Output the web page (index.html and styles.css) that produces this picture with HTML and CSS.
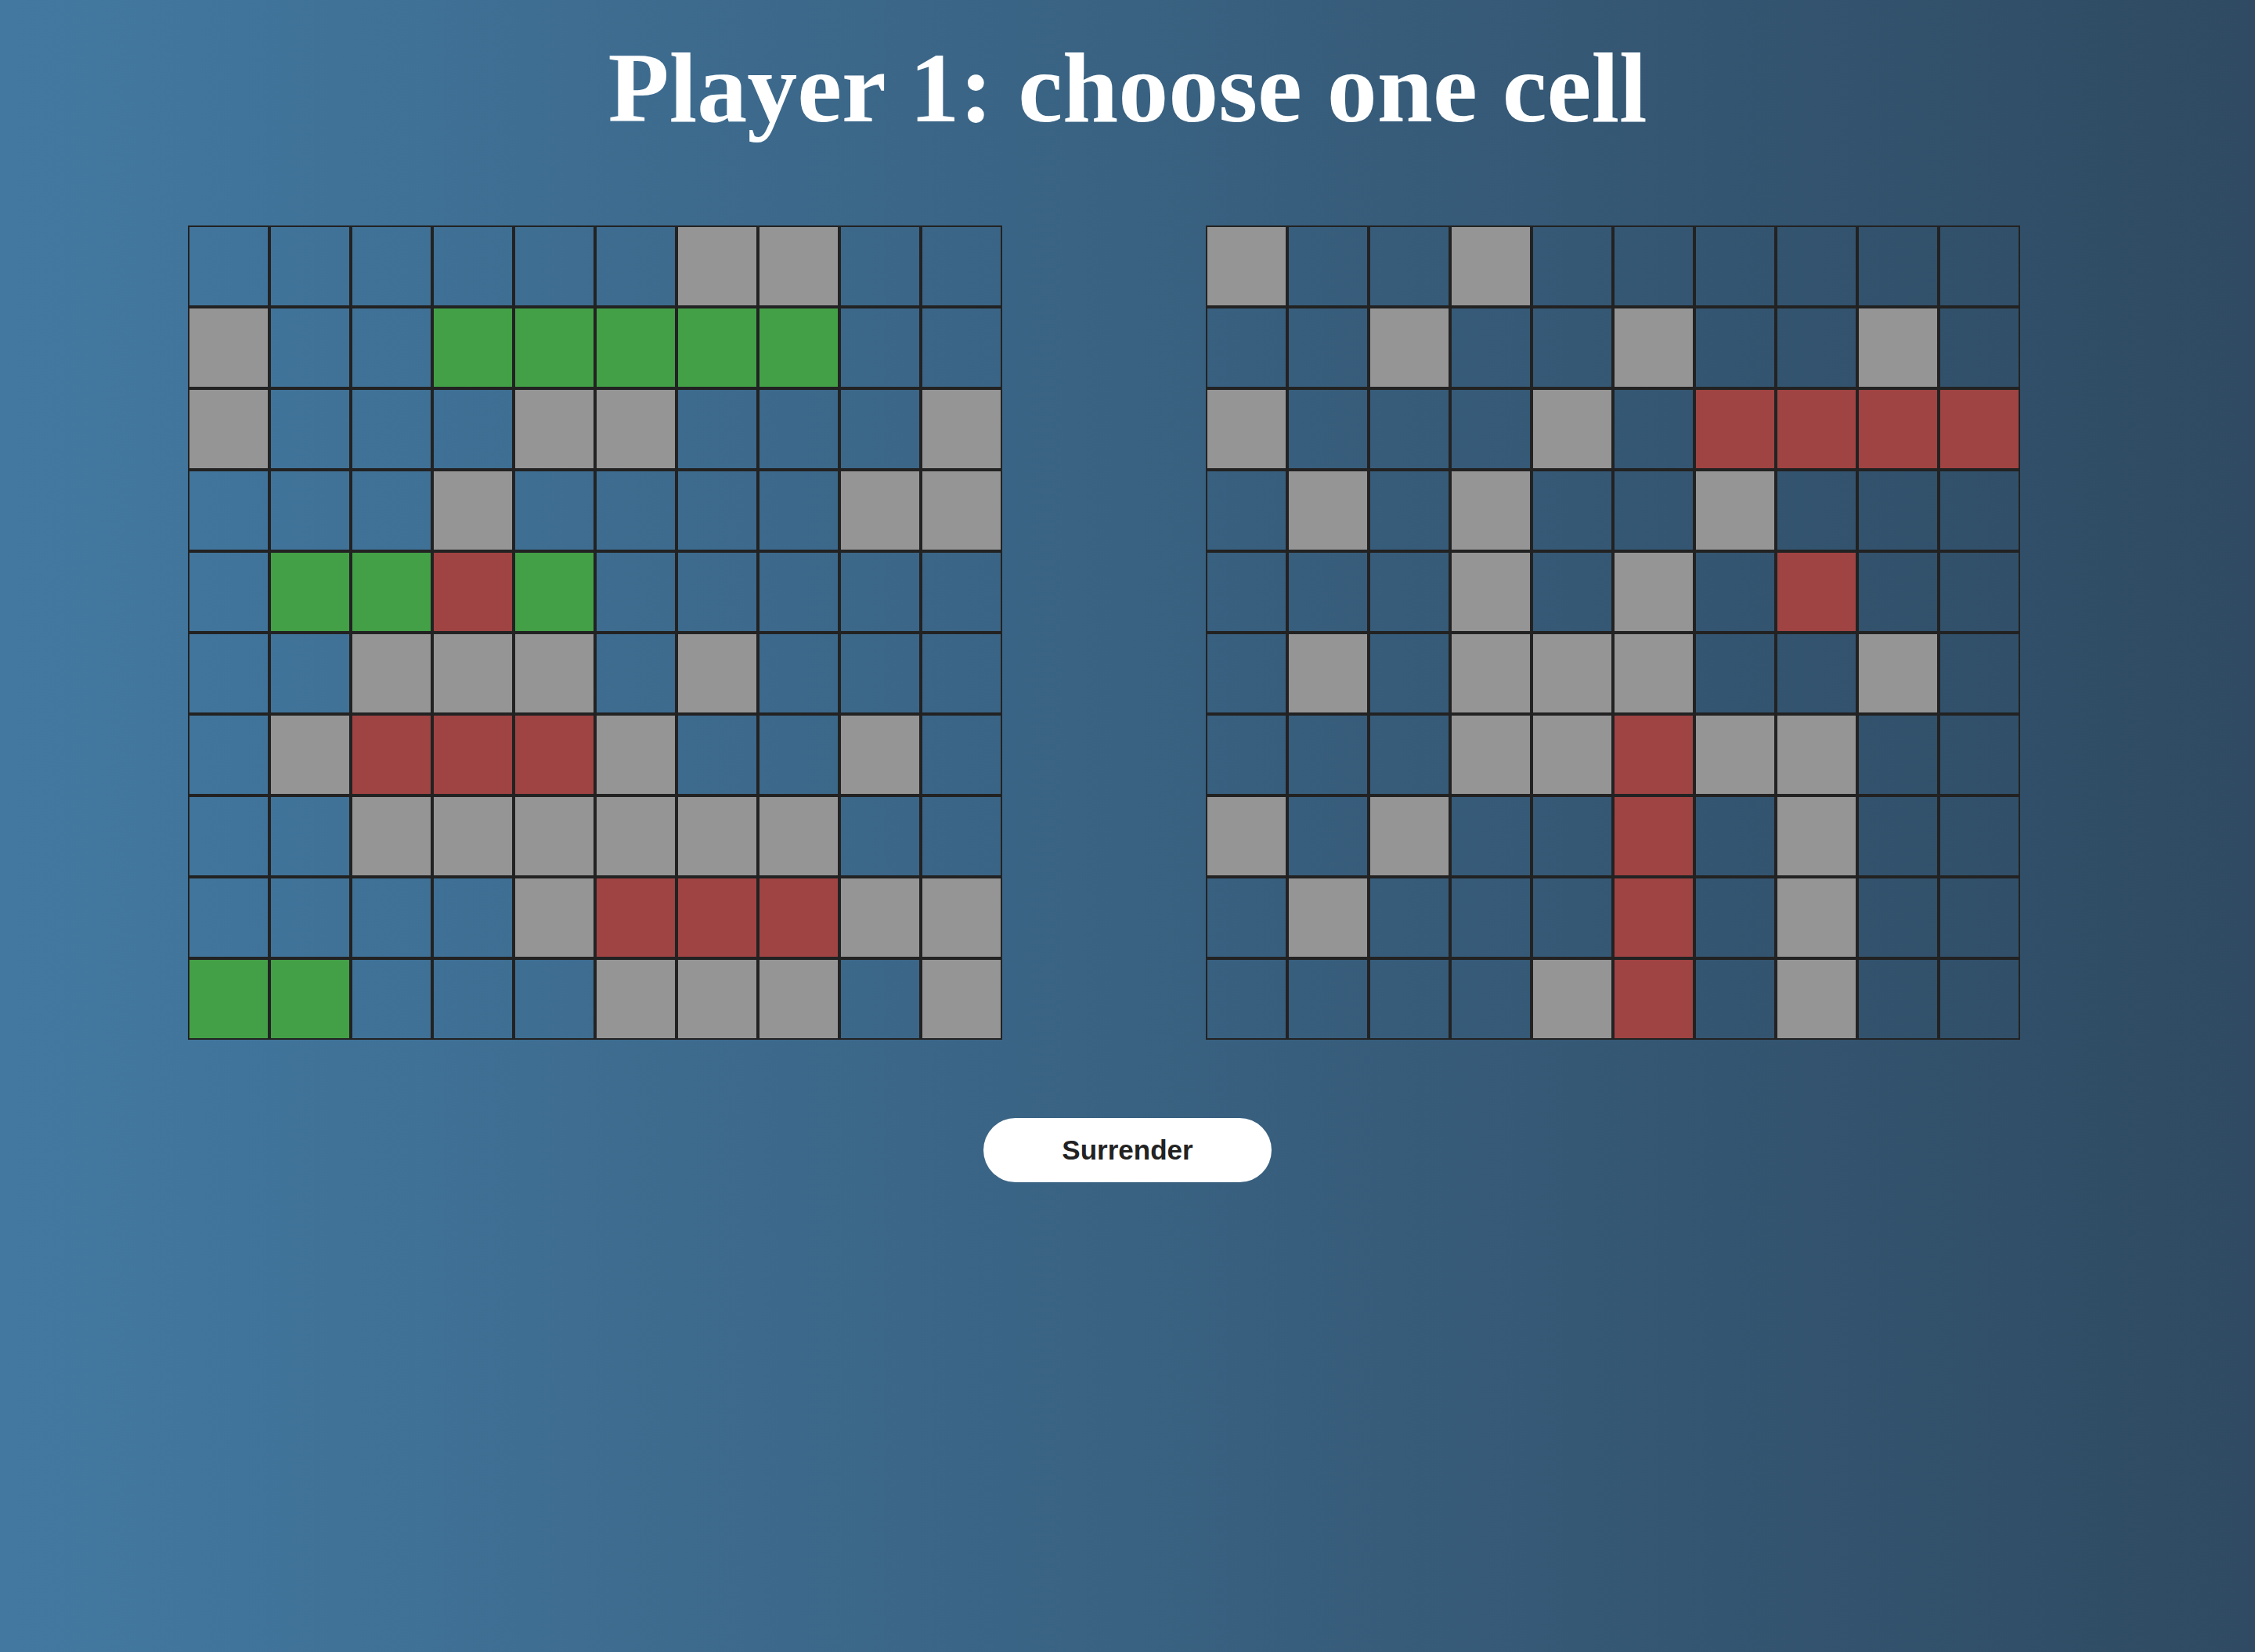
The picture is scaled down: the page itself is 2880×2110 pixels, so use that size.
FILE: index.html
```html
<!DOCTYPE html>
<html>

<head>
    <title>Battleship</title>
    <link rel="stylesheet" href="styles.css">
</head>

<body>

    <div id="game">
        <h1 id="status">Player 1: choose one cell</h1>
        <div id="boards">
            <div class="board" id="own"></div>
            <div class="board" id="enemy"></div>
        </div>
        <button id="surrender">Surrender</button>
    </div>

    <script>
        // . = water, m = miss, s = ship, h = hit
        var own = [
            "......mm..",
            "m..sssss..",
            "m...mm...m",
            "...m....mm",
            ".sshs.....",
            "..mmm.m...",
            ".mhhhm..m.",
            "..mmmmmm..",
            "....mhhhmm",
            "ss...mmm.m"
        ];
        var enemy = [
            "m..m......",
            "..m..m..m.",
            "m...m.hhhh",
            ".m.m..m...",
            "...m.m.h..",
            ".m.mmm..m.",
            "...mmhmm..",
            "m.m..h.m..",
            ".m...h.m..",
            "....mh.m.."
        ];
        var names = { ".": "water", "m": "miss", "s": "ship", "h": "hit" };

        function draw(id, rows) {
            var board = document.getElementById(id);
            for (var r = 0; r < rows.length; r++) {
                for (var c = 0; c < rows[r].length; c++) {
                    var cell = document.createElement("div");
                    cell.className = "cell " + names[rows[r][c]];
                    board.appendChild(cell);
                }
            }
        }

        draw("own", own);
        draw("enemy", enemy);
    </script>
</body>

</html>
```

FILE: styles.css
```css
html,
body {
    margin: 0;
    min-height: 100%;
}

body {
    min-height: 2110px;
    background: linear-gradient(to right, #4379a1, #2f4a62);
}

#game {
    display: flex;
    flex-direction: column;
    align-items: center;
}

#status {
    margin: 39px 0 0;
    font-family: "Liberation Serif", "Times New Roman", serif;
    font-size: 128px;
    font-weight: bold;
    color: #fff;
}

#boards {
    align-self: stretch;
    display: flex;
    gap: 260px;
    padding-left: 240px;
    margin-top: 102px;
}

.board {
    display: grid;
    grid-template-columns: repeat(10, 104px);
    grid-auto-rows: 104px;
}

.cell {
    box-sizing: border-box;
    border: 2px solid #222;
}

.miss {
    background-color: #959595;
}

.ship {
    background-color: #43a047;
}

.hit {
    background-color: #a04343;
}

#surrender {
    margin-top: 100px;
    width: 368px;
    height: 82px;
    border: none;
    border-radius: 41px;
    background-color: #fff;
    color: #222;
    font-family: "Liberation Sans", Arial, sans-serif;
    font-size: 35px;
    font-weight: bold;
}
```
